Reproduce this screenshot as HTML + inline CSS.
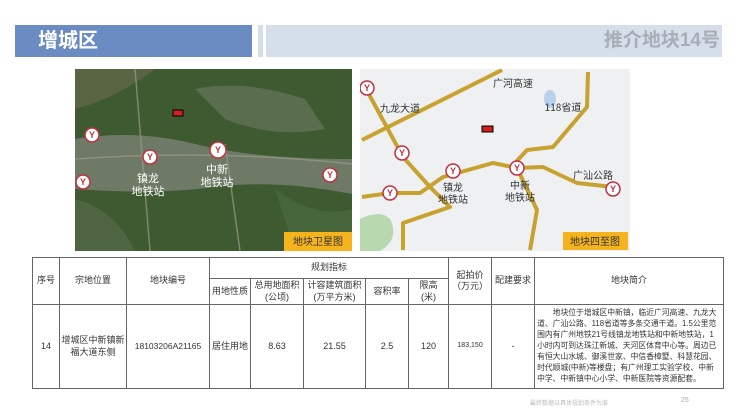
<!DOCTYPE html>
<html><head><meta charset="utf-8"><style>
*{margin:0;padding:0;box-sizing:border-box}
body{width:740px;height:416px;background:#fff;position:relative;overflow:hidden;font-family:"Liberation Sans","Noto Sans CJK SC",sans-serif;color:#333}
.abs{position:absolute}
table{position:absolute;left:32px;top:257px;width:691px;table-layout:fixed;border-collapse:collapse;font-size:9px;color:#333}
td{border:1px solid #666;text-align:center;vertical-align:middle;line-height:1.25;overflow:hidden}
</style></head><body>
<div class="abs" style="left:15px;top:25px;width:237px;height:32px;background:#6b8cc3"></div>
<div class="abs" style="left:38px;top:28px;font-size:20px;font-weight:bold;color:#fff;line-height:26px">增城区</div>
<div class="abs" style="left:258px;top:25px;width:5px;height:32px;background:#d5dfec"></div>
<div class="abs" style="left:266px;top:25px;width:456px;height:32px;background:#d5dfec"></div>
<div class="abs" style="right:20px;top:28px;font-size:19px;font-weight:bold;color:#a9adb5;line-height:26px">推介地块14号</div>

<svg class="abs" style="left:75px;top:69px" width="277" height="182" viewBox="0 0 277 182">
<rect width="277" height="182" fill="#3d5a30"/>
<path d="M0 70 Q60 60 120 75 T277 90 L277 125 Q200 110 140 118 T0 120Z" fill="#7f8678" opacity=".75"/>
<path d="M120 20 Q170 10 230 30 L250 60 Q200 70 150 50Z" fill="#6e7a62" opacity=".6"/>
<path d="M0 0 L80 0 Q40 30 0 40Z" fill="#6a6a4e" opacity=".6"/>
<path d="M0 130 Q40 140 60 182 L0 182Z" fill="#5b6a4c" opacity=".6"/>
<path d="M200 120 Q240 150 277 140 L277 182 L220 182Z" fill="#4a6a3c" opacity=".7"/>
<path d="M60 0 L75 182 M150 75 L165 182 M0 90 Q140 80 277 95" stroke="#9a9a8a" stroke-width="1.5" fill="none" opacity=".7"/>
<rect x="98" y="41" width="10" height="6" fill="#d02020" stroke="#000"/>
<g fill="#fff" stroke="#c03040" stroke-width="1.5">
<circle cx="17" cy="66" r="7"/><circle cx="75" cy="88" r="7"/><circle cx="143" cy="81" r="8"/><circle cx="8" cy="113" r="7"/><circle cx="255" cy="106" r="7"/></g>
<g fill="#c03040" font-size="9" font-weight="bold" text-anchor="middle"><text x="17" y="69">Y</text><text x="75" y="91">Y</text><text x="143" y="84">Y</text><text x="8" y="116">Y</text><text x="255" y="109">Y</text></g>
<g fill="#fff" font-size="11" text-anchor="middle" font-family="Noto Sans CJK SC"><text x="73" y="113">镇龙</text><text x="73" y="126">地铁站</text><text x="142" y="104">中新</text><text x="142" y="117">地铁站</text></g>
<rect x="209" y="163" width="68" height="19" fill="#f5b31d"/><text x="243" y="176" font-size="10" text-anchor="middle" fill="#333" font-family="Noto Sans CJK SC">地块卫星图</text>
</svg>

<svg class="abs" style="left:360px;top:69px" width="270" height="182" viewBox="0 0 270 182">
<rect width="270" height="182" fill="#eef0f2"/>
<path d="M0 150 Q20 140 30 150 Q40 170 20 182 L0 182Z" fill="#b8d8b0"/>
<ellipse cx="190" cy="30" rx="6" ry="9" fill="#b9d1ea"/>
<g stroke="#c8a22f" stroke-width="4" fill="none" stroke-linejoin="round">
<path d="M2 71 L142 1"/>
<path d="M5 18 L43 88 L70 118 L90 138 L43 154 L43 181"/>
<path d="M2 128 L30 124 L60 124 L83 108 L133 94 L157 99 L183 98 L217 114 L253 118"/>
<path d="M228 3 L227 38 L193 78 L167 81 L155 94"/>
<path d="M157 99 L177 141 L170 181"/>
</g>
<rect x="122" y="57" width="11" height="6" fill="#d02020" stroke="#000"/>
<g fill="#fff" stroke="#c03040" stroke-width="1.5">
<circle cx="7" cy="19" r="7"/><circle cx="42" cy="84" r="7"/><circle cx="93" cy="102" r="7"/><circle cx="30" cy="124" r="7"/><circle cx="157" cy="99" r="7"/><circle cx="253" cy="120" r="7"/></g>
<g fill="#c03040" font-size="9" font-weight="bold" text-anchor="middle"><text x="7" y="22">Y</text><text x="42" y="87">Y</text><text x="93" y="105">Y</text><text x="30" y="127">Y</text><text x="157" y="102">Y</text><text x="253" y="123">Y</text></g>
<g fill="#333" font-size="10" text-anchor="middle" font-family="Noto Sans CJK SC"><text x="153" y="18">广河高速</text><text x="40" y="43">九龙大道</text><text x="203" y="42">118省道</text><text x="233" y="110">广汕公路</text><text x="93" y="122">镇龙</text><text x="93" y="134">地铁站</text><text x="160" y="120">中新</text><text x="160" y="132">地铁站</text></g>
<rect x="203" y="163" width="65" height="18" fill="#f5b31d"/><text x="235" y="176" font-size="10" text-anchor="middle" fill="#333" font-family="Noto Sans CJK SC">地块四至图</text>
</svg>

<table>
<colgroup><col style="width:27px"><col style="width:67px"><col style="width:83px"><col style="width:41px"><col style="width:53px"><col style="width:62px"><col style="width:43px"><col style="width:40px"><col style="width:43px"><col style="width:43px"><col style="width:189px"></colgroup>
<tr style="height:21px"><td rowspan="2">序号</td><td rowspan="2">宗地位置</td><td rowspan="2">地块编号</td><td colspan="5">规划指标</td><td rowspan="2">起拍价<br>（万元）</td><td rowspan="2">配建要求</td><td rowspan="2">地块简介</td></tr>
<tr style="height:26px"><td>用地性质</td><td>总用地面积<br>(公顷)</td><td>计容建筑面积<br>(万平方米)</td><td>容积率</td><td>限高<br>(米)</td></tr>
<tr style="height:84px"><td>14</td><td>增城区中新镇新<br>福大道东侧</td><td style="font-size:8.5px">18103206A21165</td><td>居住用地</td><td>8.63</td><td>21.55</td><td>2.5</td><td>120</td><td style="font-size:7px">183,150</td><td>-</td><td style="text-align:left;font-size:7.8px;line-height:1.4;padding:1px 2px">&emsp;&emsp;地块位于增城区中新镇，临近广河高速、九龙大道、广汕公路、118省道等多条交通干道。1.5公里范围内有广州地铁21号线镇龙地铁站和中新地铁站，1小时内可到达珠江新城、天河区体育中心等。周边已有恒大山水城、御溪世家、中信香樟墅、科慧花园、时代顺城(中新)等楼盘；有广州理工实验学校、中新中学、中新镇中心小学、中新医院等资源配套。</td></tr>
</table>
<div class="abs" style="left:530px;top:398px;font-size:6px;color:#bbb">最终数据以具体规划条件为准</div>
<div class="abs" style="left:681px;top:397px;font-size:7px;color:#aaa">25</div>
</body></html>
